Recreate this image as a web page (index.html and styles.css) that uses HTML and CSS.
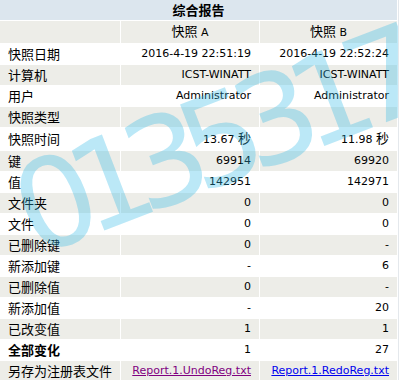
FILE: index.html
```html
<!DOCTYPE html>
<html lang="zh-CN">
<head>
<meta charset="utf-8">
<title>综合报告</title>
<link rel="stylesheet" href="styles.css">
</head>
<body>
<div class="page">
  <table class="report">
    <colgroup>
      <col class="c-label">
      <col class="c-a">
      <col class="c-b">
    </colgroup>
    <tr class="title"><td colspan="3">综合报告</td></tr>
    <tr class="head">
      <td></td>
      <td><span class="cjk">快照</span> A</td>
      <td><span class="cjk">快照</span> B</td>
    </tr>
    <tr class="w"><td>快照日期</td><td>2016-4-19 22:51:19</td><td>2016-4-19 22:52:24</td></tr>
    <tr class="g"><td>计算机</td><td>ICST-WINATT</td><td>ICST-WINATT</td></tr>
    <tr class="w"><td>用户</td><td>Administrator</td><td>Administrator</td></tr>
    <tr class="g"><td>快照类型</td><td></td><td></td></tr>
    <tr class="w"><td>快照时间</td><td>13.67 <span class="cjk">秒</span></td><td>11.98 <span class="cjk">秒</span></td></tr>
    <tr class="g"><td>键</td><td>69914</td><td>69920</td></tr>
    <tr class="w"><td>值</td><td>142951</td><td>142971</td></tr>
    <tr class="g"><td>文件夹</td><td>0</td><td>0</td></tr>
    <tr class="w"><td>文件</td><td>0</td><td>0</td></tr>
    <tr class="g"><td>已删除键</td><td>0</td><td>-</td></tr>
    <tr class="w"><td>新添加键</td><td>-</td><td>6</td></tr>
    <tr class="g"><td>已删除值</td><td>0</td><td>-</td></tr>
    <tr class="w"><td>新添加值</td><td>-</td><td>20</td></tr>
    <tr class="g"><td>已改变值</td><td>1</td><td>1</td></tr>
    <tr class="w total"><td>全部变化</td><td>1</td><td>27</td></tr>
    <tr class="g"><td>另存为注册表文件</td><td><a class="visited" href="#">Report.1.UndoReg.txt</a></td><td><a href="#">Report.1.RedoReg.txt</a></td></tr>
  </table>
  <div class="watermark">0135317</div>
</div>
</body>
</html>
```

FILE: styles.css
```css
html, body {
  margin: 0;
  padding: 0;
  background: #ffffff;
}

.page {
  position: relative;
  width: 398px;
  height: 380px;
  overflow: hidden;
  border-right: 1px solid #e4e8ec;
}

.report {
  width: 398px;
  table-layout: fixed;
  border-collapse: separate;
  border-spacing: 0;
  font-family: "DejaVu Sans", "Noto Sans CJK SC", sans-serif;
  font-size: 11px;
  color: #000;
  border-bottom: 2px solid #d2dce7;
}

.c-label { width: 121px; }
.c-a { width: 139px; }
.c-b { width: 138px; }

.report td {
  height: 20px;
  line-height: 20px;
  padding: 0 8px 0 8px;
  border-right: 1px solid #ffffff;
  border-bottom: 1px solid #ffffff;
  text-align: right;
  white-space: nowrap;
  overflow: hidden;
}

.report td:first-child {
  text-align: left;
  font-family: "Noto Sans CJK SC", sans-serif;
  font-size: 13px;
}

.cjk {
  font-family: "Noto Sans CJK SC", sans-serif;
  font-size: 13px;
}

.title td {
  background: #dce6ee;
  text-align: center;
  font-weight: bold;
  font-family: "Noto Sans CJK SC", sans-serif;
  font-size: 13px;
}

.title td:first-child {
  text-align: center;
  font-weight: bold;
}

.head td {
  background: #edede8;
  text-align: center;
}

.w td { background: #ffffff; }
.g td { background: #edede8; }

.total td:first-child { font-weight: bold; }

.report a {
  color: #0000ee;
  text-decoration: underline;
}

.report a.visited {
  color: #800080;
}

.watermark {
  position: absolute;
  left: 212px;
  top: 143px;
  transform: translate(-50%, -50%) rotate(-21deg);
  font-family: "DejaVu Sans", sans-serif;
  font-size: 124px;
  letter-spacing: -20px;
  line-height: 1;
  color: rgba(50, 185, 230, 0.33);
  pointer-events: none;
  white-space: nowrap;
}
```
